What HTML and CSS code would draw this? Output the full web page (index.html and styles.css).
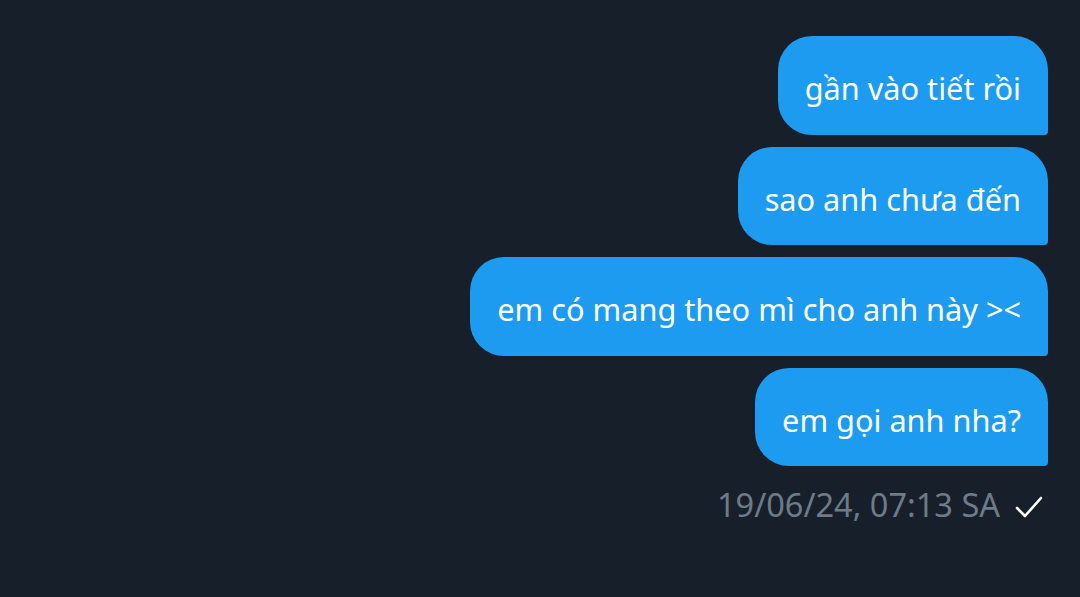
FILE: index.html
```html
<!DOCTYPE html>
<html lang="vi">
<head>
<meta charset="utf-8">
<link rel="stylesheet" href="styles.css">
</head>
<body>
<div class="chat">
  <div class="bubble">gần vào tiết rồi</div>
  <div class="bubble">sao anh chưa đến</div>
  <div class="bubble">em có mang theo mì cho anh này &gt;&lt;</div>
  <div class="bubble">em gọi anh nha?</div>
  <div class="meta">
    <span class="time">19/06/24, 07:13 SA</span>
    <svg class="check" width="30" height="24" viewBox="0 0 30 24"><path d="M3 13 L11 21 L27 3" fill="none" stroke="#ffffff" stroke-width="2.6" stroke-linecap="round" stroke-linejoin="round"/></svg>
  </div>
</div>
</body>
</html>
```
FILE: styles.css
```css
html, body {
  margin: 0;
  padding: 0;
  background: #17202a;
  height: 100%;
}
body {
  font-family: "Noto Sans", "Open Sans", sans-serif;
}
.chat {
  display: flex;
  flex-direction: column;
  align-items: flex-end;
  gap: 12px;
  padding: 36px 32px 0 0;
}
.bubble {
  background: #1d9bf0;
  color: #ffffff;
  font-size: 30.7px;
  line-height: 42.5px;
  padding: 31px 27px 25px;
  border-radius: 34px 34px 4px 34px;
}
.meta {
  display: flex;
  align-items: center;
  gap: 14px;
  margin-top: 7px;
  padding-right: 4px;
}
.time {
  color: #6e7b88;
  font-size: 32.5px;
  line-height: 40px;
}
.check {
  display: block;
  margin-top: 4px;
}
```
